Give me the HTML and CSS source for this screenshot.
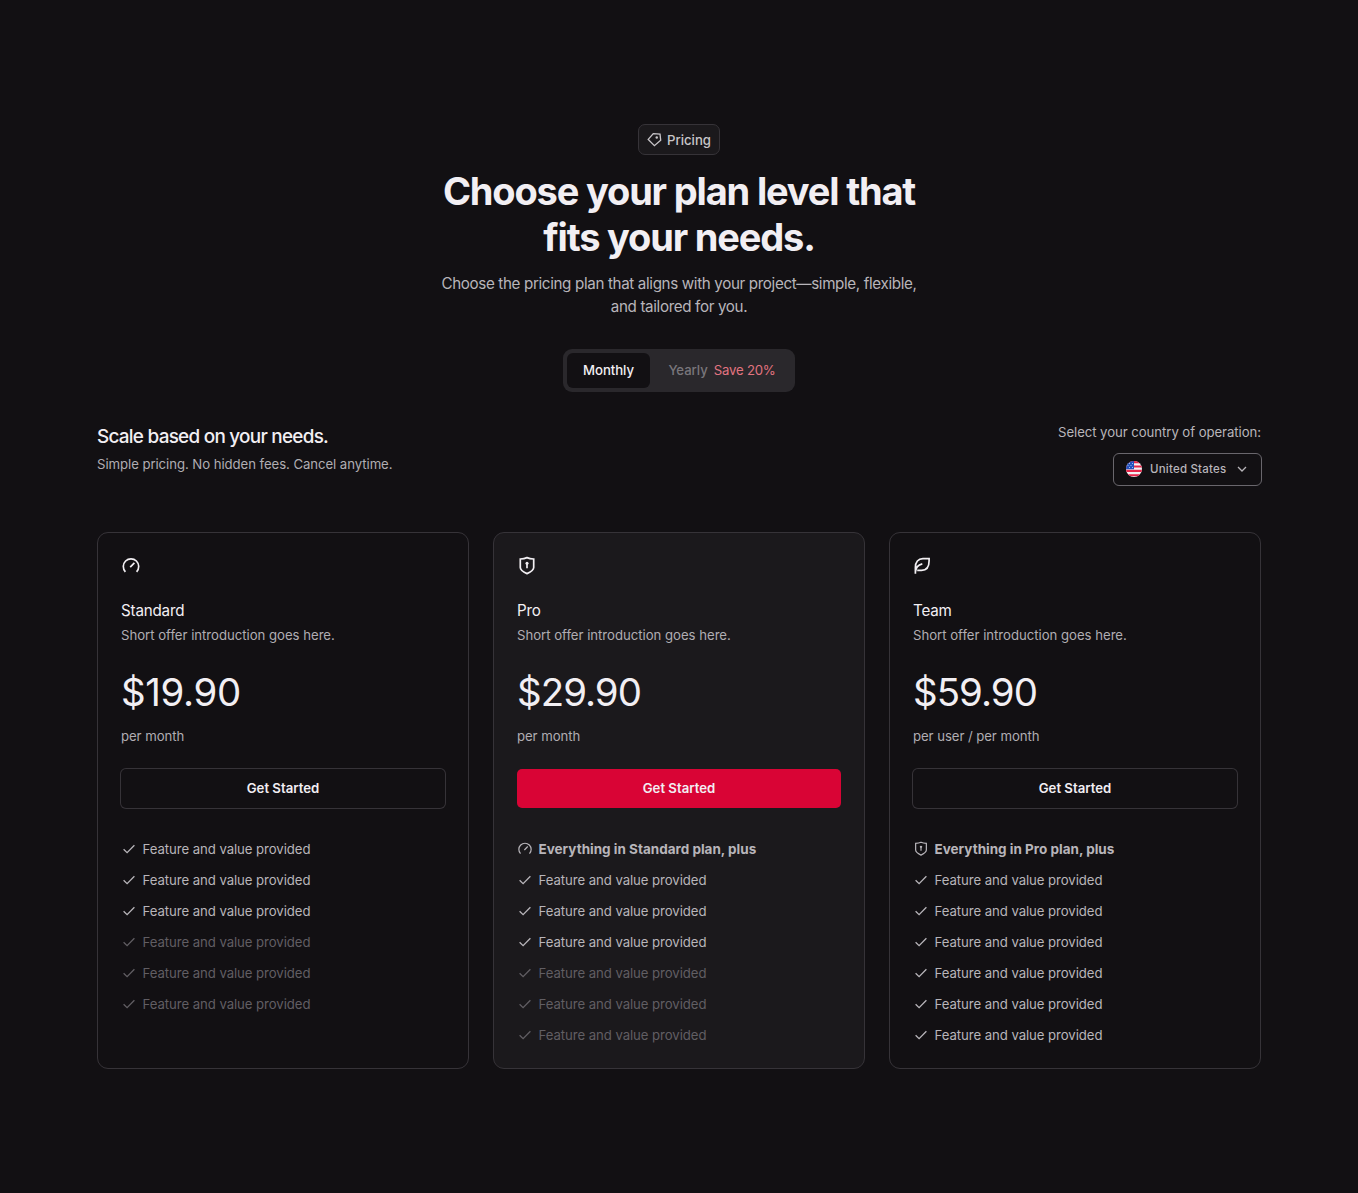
FILE: index.html
```html
<!DOCTYPE html>
<html lang="en">
<head>
<meta charset="utf-8">
<title>Pricing</title>
<link rel="stylesheet" href="styles.css">
</head>
<body>
<svg class="sprite" aria-hidden="true">
  <symbol id="gauge" viewBox="0 0 20 20"><path d="M4.400 15.800a7.700 7.700 0 1 1 11.200 0M9.200 11.200l4.200-4.300"/></symbol>
  <symbol id="shield" viewBox="0 0 20 20"><path d="M10 1.600c2 .9 4.300 1.300 6.700 1.400v8.400c0 2.800-2.900 4.500-6.700 6.200-3.800-1.700-6.700-3.400-6.700-6.200V3c2.400-.1 4.700-.5 6.700-1.400z"/><path d="M10 8v4.200"/><circle cx="10" cy="7.300" r="1.500" class="dot"/></symbol>
  <symbol id="leaf" viewBox="0 0 20 20"><path d="M2.400 17.800v-6.400c0-5.300 2.800-8.700 7.500-8.700h6.200v2c0 6.300-3 9.600-7.600 9.600H4.200M2.400 16c.3-4.100 2.500-7 6.900-8.100"/></symbol>
  <symbol id="check" viewBox="0 0 14 14"><path d="M1.600 7.200l3.500 3.400 7.300-7.400"/></symbol>
</svg>
<main class="page">
  <header class="hero">
    <span class="pill">
      <svg class="pill-icon" viewBox="0 0 16 16"><path d="M1.300 7.900L6.700 1.700l7.200.5.700 6.500-6.700 5.900z"/><circle cx="10.400" cy="5.800" r="1.300" class="dot"/></svg>
      <span>Pricing</span>
    </span>
    <h1>Choose your plan level that<br>fits your needs.</h1>
    <p class="lead">Choose the pricing plan that aligns with your project—simple, flexible,<br>and tailored for you.</p>
    <div class="toggle">
      <button class="tab tab-active">Monthly</button>
      <button class="tab tab-yearly">Yearly <span class="save">Save 20%</span></button>
    </div>
  </header>

  <section class="intro">
    <div>
      <h2>Scale based on your needs.</h2>
      <p class="sub">Simple pricing. No hidden fees. Cancel anytime.</p>
    </div>
    <div class="country">
      <span class="country-label">Select your country of operation:</span>
      <button class="select">
        <svg class="flag" viewBox="0 0 16 16"><defs><clipPath id="round"><circle cx="8" cy="8" r="8"/></clipPath></defs><g clip-path="url(#round)"><path fill="#f4f1f4" d="M0 0h16v16H0z"/><path fill="#e8264b" d="M0 0h16v2.200H0zM0 4.400h16v2.200H0zM0 8.800h16V11H0zM0 13.200h16v2H0z"/><path fill="#2452bd" d="M0 0h8v8.200H0z"/><path fill="#9db7ec" d="M3 2h1v1H3zM6 2h1v1H6zM4.500 4h1v1h-1zM1.500 4h1v1h-1zM3 6h1v1H3zM6 6h1v1H6z"/></g></svg>
        <span>United States</span>
        <svg class="chevron" viewBox="0 0 10 10"><path d="M1 3l4 4 4-4"/></svg>
      </button>
    </div>
  </section>

  <section class="cards">
    <article class="card">
      <svg class="plan-icon"><use href="#gauge"/></svg>
      <h3>Standard</h3>
      <p class="desc">Short offer introduction goes here.</p>
      <p class="price">$19.90</p>
      <p class="per">per month</p>
      <button class="cta">Get Started</button>
      <ul class="features">
        <li><svg class="check"><use href="#check"/></svg><span>Feature and value provided</span></li>
        <li><svg class="check"><use href="#check"/></svg><span>Feature and value provided</span></li>
        <li><svg class="check"><use href="#check"/></svg><span>Feature and value provided</span></li>
        <li class="off"><svg class="check"><use href="#check"/></svg><span>Feature and value provided</span></li>
        <li class="off"><svg class="check"><use href="#check"/></svg><span>Feature and value provided</span></li>
        <li class="off"><svg class="check"><use href="#check"/></svg><span>Feature and value provided</span></li>
      </ul>
    </article>
    <article class="card card-pro">
      <svg class="plan-icon"><use href="#shield"/></svg>
      <h3>Pro</h3>
      <p class="desc">Short offer introduction goes here.</p>
      <p class="price price-wide">$29.90</p>
      <p class="per">per month</p>
      <button class="cta cta-primary">Get Started</button>
      <ul class="features">
        <li class="all"><svg class="mini"><use href="#gauge"/></svg><span>Everything in Standard plan, plus</span></li>
        <li><svg class="check"><use href="#check"/></svg><span>Feature and value provided</span></li>
        <li><svg class="check"><use href="#check"/></svg><span>Feature and value provided</span></li>
        <li><svg class="check"><use href="#check"/></svg><span>Feature and value provided</span></li>
        <li class="off"><svg class="check"><use href="#check"/></svg><span>Feature and value provided</span></li>
        <li class="off"><svg class="check"><use href="#check"/></svg><span>Feature and value provided</span></li>
        <li class="off"><svg class="check"><use href="#check"/></svg><span>Feature and value provided</span></li>
      </ul>
    </article>
    <article class="card">
      <svg class="plan-icon"><use href="#leaf"/></svg>
      <h3>Team</h3>
      <p class="desc">Short offer introduction goes here.</p>
      <p class="price price-wide">$59.90</p>
      <p class="per">per user / per month</p>
      <button class="cta">Get Started</button>
      <ul class="features">
        <li class="all"><svg class="mini"><use href="#shield"/></svg><span>Everything in Pro plan, plus</span></li>
        <li><svg class="check"><use href="#check"/></svg><span>Feature and value provided</span></li>
        <li><svg class="check"><use href="#check"/></svg><span>Feature and value provided</span></li>
        <li><svg class="check"><use href="#check"/></svg><span>Feature and value provided</span></li>
        <li><svg class="check"><use href="#check"/></svg><span>Feature and value provided</span></li>
        <li><svg class="check"><use href="#check"/></svg><span>Feature and value provided</span></li>
        <li><svg class="check"><use href="#check"/></svg><span>Feature and value provided</span></li>
      </ul>
    </article>
  </section>
</main>
</body>
</html>
```
FILE: styles.css
```css
* { box-sizing: border-box; margin: 0; padding: 0; }
body {
  background: #121013;
  color: #f2eff3;
  font-family: Inter, "Liberation Sans", sans-serif;
  font-size: 13.2px;
  letter-spacing: -0.07px;
}
button { font: inherit; letter-spacing: inherit; color: inherit; background: none; border: 0; }
svg { display: block; flex: none; fill: none; stroke: currentColor; stroke-width: 1.5; }
.dot { fill: currentColor; stroke: none; }
.sprite { display: none; }
.page { min-height: 1193px; padding: 124px 97px 0; }

.hero { display: flex; flex-direction: column; align-items: center; text-align: center; }
.pill {
  display: flex; align-items: center; justify-content: center; gap: 5px;
  width: 82px; height: 31px;
  border: 1px solid #363338; border-radius: 7px;
  background: #1b191c; color: #c8c5c9;
  font-weight: 500; letter-spacing: 0;
}
.pill-icon { width: 15px; height: 15px; stroke-width: 1.4; }
h1 { margin-top: 13px; font-size: 38px; line-height: 46px; font-weight: 700; letter-spacing: -1.17px; }
.lead { margin-top: 12px; font-size: 15.2px; line-height: 23px; color: #b8b5ba; letter-spacing: -0.36px; }
.toggle {
  display: flex; margin-top: 31px; padding: 4px;
  width: 232px; height: 43px;
  border-radius: 9px; background: #2a282c;
}
.tab {
  display: flex; flex: 1; align-items: center; justify-content: center; gap: 6px;
  padding-bottom: 2px;
  font-weight: 500; color: #79767b;
}
.tab-active { flex: 0 0 83px; background: #121013; color: #f2eff3; border-radius: 6px; }
.tab-yearly { padding-left: 3px; }
.save { color: #e27480; font-weight: 400; letter-spacing: -0.2px; }

.intro { display: flex; justify-content: space-between; margin-top: 31px; height: 109px; }
h2 { margin-top: 1px; font-size: 18.9px; line-height: 26px; font-weight: 500; letter-spacing: -0.73px; }
.sub { margin-top: 4px; line-height: 20px; color: #b0adb2; }
.country { display: flex; flex-direction: column; align-items: flex-end; margin-top: -1px; }
.country-label { line-height: 20px; color: #b8b5ba; }
.select {
  display: flex; align-items: center; margin: 11px -1px 0 0; padding: 0 0 1px 12px;
  width: 149px; height: 33px;
  border: 1px solid #69666c; border-radius: 6px;
  font-size: 11.5px; font-weight: 500; letter-spacing: 0.2px; color: #b8b5ba;
}
.flag { width: 16px; height: 16px; margin-right: 8px; stroke: none; }
.chevron { width: 10px; height: 10px; margin-left: 11px; stroke-width: 1.3; }

.cards { display: grid; grid-template-columns: repeat(3, 1fr); gap: 24px; }
.card {
  height: 537px; padding: 23px;
  border: 1px solid #363338; border-radius: 11px;
}
.card-pro { background: #1b191c; }
.plan-icon { width: 20px; height: 20px; stroke-width: 1.7; }
h3 { margin-top: 23px; font-size: 15.2px; line-height: 24px; font-weight: 400; letter-spacing: -0.2px; }
.desc { margin-top: 2px; line-height: 20px; color: #b0adb2; letter-spacing: -0.03px; }
.price { margin-top: 24px; font-size: 38.4px; line-height: 46px; letter-spacing: -0.35px; }
.price-wide { letter-spacing: -0.95px; }
.per { margin-top: 11px; line-height: 20px; color: #b0adb2; }
.cta {
  display: block; margin-top: 23px; padding-bottom: 2px; width: 100%; height: 39px;
  border-radius: 5px; box-shadow: 0 0 0 1px #363338;
  font-weight: 600; letter-spacing: 0;
}
.cta-primary { background: #d90435; box-shadow: none; }
.features { margin-top: 25px; list-style: none; color: #b8b5ba; }
.features li { display: flex; align-items: center; height: 31px; }
.check { width: 14px; height: 14px; margin: 0 6.500px 0 1px; stroke-width: 1.3; }
.mini { width: 16px; height: 16px; margin-right: 5.500px; }
.features .off { color: #615e63; }
.all { font-size: 13.5px; font-weight: 700; letter-spacing: 0; }
```
